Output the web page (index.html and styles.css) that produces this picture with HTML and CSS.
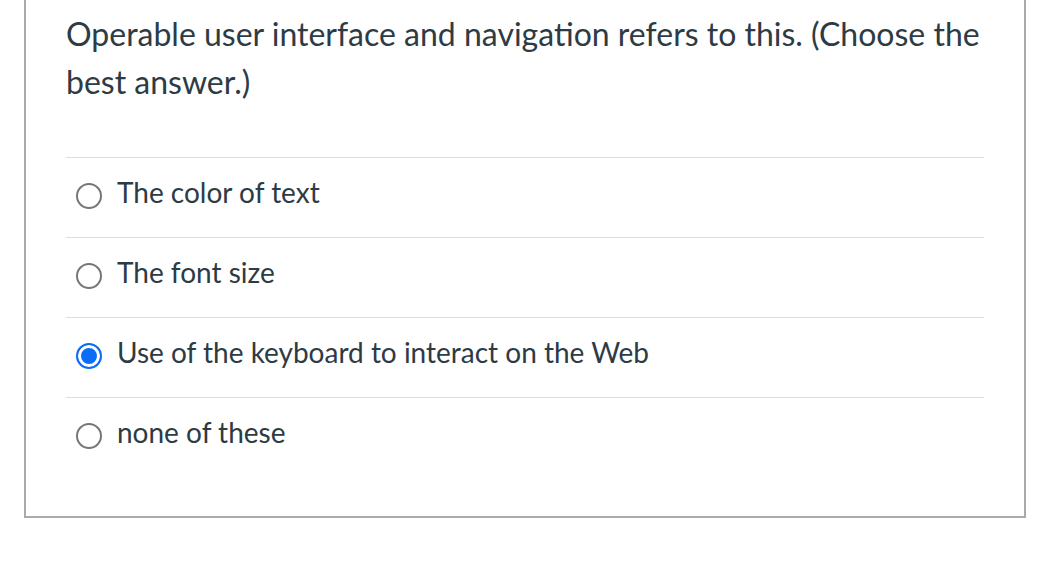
FILE: index.html
```html
<!DOCTYPE html>
<html>
<head>
<meta charset="utf-8">
<link rel="stylesheet" href="styles.css">
</head>
<body>
<div class="card">
  <div class="question">Operable user interface and navigation refers to this. (Choose the best answer.)</div>
  <div class="answers">
    <label class="answer"><span class="radio"></span><span class="label">The color of text</span></label>
    <label class="answer"><span class="radio"></span><span class="label">The font size</span></label>
    <label class="answer"><span class="radio checked"></span><span class="label">Use of the keyboard to interact on the Web</span></label>
    <label class="answer"><span class="radio"></span><span class="label">none of these</span></label>
  </div>
</div>
</body>
</html>
```
FILE: styles.css
```css
html, body {
  margin: 0;
  padding: 0;
  background: #fff;
}
body {
  font-family: Lato, "Open Sans", sans-serif;
  color: #2d3b45;
  padding-left: 24px;
}
.card {
  width: 918px;
  margin-top: -20px;
  border: 2px solid #aaaaaa;
  padding: 28px 40px 39px 40px;
  box-sizing: content-box;
}
.question {
  font-size: 32px;
  line-height: 48px;
}
.answers {
  margin-top: 51px;
  width: 918px;
}
.answer {
  display: flex;
  align-items: center;
  height: 75px;
  padding-bottom: 4px;
  border-top: 1px solid #dddddd;
  padding-left: 10px;
}
.radio {
  width: 22px;
  height: 22px;
  border: 2px solid #777;
  border-radius: 50%;
  box-sizing: content-box;
  flex: none;
  margin-right: 15px;
}
.radio.checked {
  border-color: #0b6cf5;
  background: #0b6cf5;
  box-shadow: inset 0 0 0 3px #fff;
}
.label {
  font-size: 28px;
  margin-bottom: 8px;
}
```
